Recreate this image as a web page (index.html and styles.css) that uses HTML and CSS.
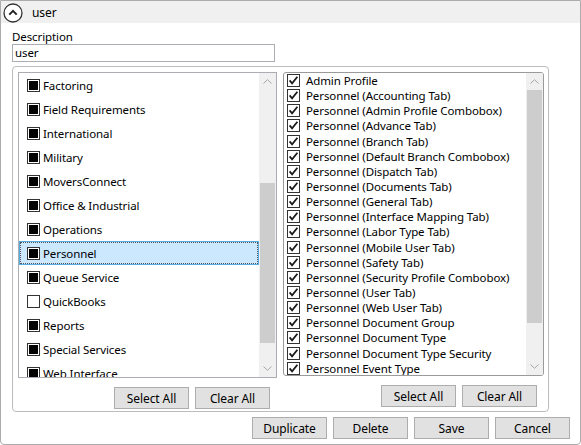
FILE: index.html
```html
<!DOCTYPE html>
<html lang="en">
<head>
  <meta charset="UTF-8" />
  <title>Security Profile</title>
  <link rel="stylesheet" href="styles.css">
</head>
<body>
  <div class="panel">
    <div class="panel-head">
      <svg class="collapse-btn" width="20" height="20" viewBox="0 0 20 20">
        <circle cx="10" cy="10" r="9" fill="#fff" stroke="#333" stroke-width="1.3"/>
        <path d="M6.3 11.6 L10 7.9 L13.7 11.6" fill="none" stroke="#222" stroke-width="2"/>
      </svg>
      <span class="head-title">user</span>
    </div>

    <div class="panel-body">
      <div class="field-label">Description</div>
      <div class="text-input">user</div>

      <div class="group">
        <div class="group-col left-col">
          <div class="list module-list">
            <div class="list-items">
              <div class="module-row"><span class="box partial"></span>Factoring</div>
              <div class="module-row"><span class="box partial"></span>Field Requirements</div>
              <div class="module-row"><span class="box partial"></span>International</div>
              <div class="module-row"><span class="box partial"></span>Military</div>
              <div class="module-row"><span class="box partial"></span>MoversConnect</div>
              <div class="module-row"><span class="box partial"></span>Office &amp; Industrial</div>
              <div class="module-row"><span class="box partial"></span>Operations</div>
              <div class="module-row selected"><span class="box partial"></span>Personnel</div>
              <div class="module-row"><span class="box partial"></span>Queue Service</div>
              <div class="module-row"><span class="box"></span>QuickBooks</div>
              <div class="module-row"><span class="box partial"></span>Reports</div>
              <div class="module-row"><span class="box partial"></span>Special Services</div>
              <div class="module-row"><span class="box partial"></span>Web Interface</div>
            </div>
            <div class="scrollbar">
              <div class="sb-arrow"><svg width="9" height="5" viewBox="0 0 9 5"><path d="M0.5 4.5 L4.5 0.7 L8.5 4.5" fill="none" stroke="#a6a6a6" stroke-width="1"/></svg></div>
              <div class="sb-track"><div class="sb-thumb thumb-left"></div></div>
              <div class="sb-arrow"><svg width="9" height="5" viewBox="0 0 9 5"><path d="M0.5 0.5 L4.5 4.3 L8.5 0.5" fill="none" stroke="#a6a6a6" stroke-width="1"/></svg></div>
            </div>
          </div>
          <div class="btn-row">
            <button class="btn">Select All</button>
            <button class="btn">Clear All</button>
          </div>
        </div>

        <div class="group-col right-col">
          <div class="list perm-list">
            <div class="list-items" id="permItems"></div>
            <div class="scrollbar">
              <div class="sb-arrow"><svg width="9" height="5" viewBox="0 0 9 5"><path d="M0.5 4.5 L4.5 0.7 L8.5 4.5" fill="none" stroke="#a6a6a6" stroke-width="1"/></svg></div>
              <div class="sb-track"><div class="sb-thumb thumb-right"></div></div>
              <div class="sb-arrow"><svg width="9" height="5" viewBox="0 0 9 5"><path d="M0.5 0.5 L4.5 4.3 L8.5 0.5" fill="none" stroke="#a6a6a6" stroke-width="1"/></svg></div>
            </div>
          </div>
          <div class="btn-row">
            <button class="btn">Select All</button>
            <button class="btn">Clear All</button>
          </div>
        </div>
      </div>

      <div class="actions">
        <button class="btn">Duplicate</button>
        <button class="btn">Delete</button>
        <button class="btn">Save</button>
        <button class="btn">Cancel</button>
      </div>
    </div>
  </div>

  <script>
    const permissions = [
      'Admin Profile',
      'Personnel (Accounting Tab)',
      'Personnel (Admin Profile Combobox)',
      'Personnel (Advance Tab)',
      'Personnel (Branch Tab)',
      'Personnel (Default Branch Combobox)',
      'Personnel (Dispatch Tab)',
      'Personnel (Documents Tab)',
      'Personnel (General Tab)',
      'Personnel (Interface Mapping Tab)',
      'Personnel (Labor Type Tab)',
      'Personnel (Mobile User Tab)',
      'Personnel (Safety Tab)',
      'Personnel (Security Profile Combobox)',
      'Personnel (User Tab)',
      'Personnel (Web User Tab)',
      'Personnel Document Group',
      'Personnel Document Type',
      'Personnel Document Type Security',
      'Personnel Event Type'
    ];

    const tick = '<svg class="tick" width="13" height="13" viewBox="0 0 13 13">' +
      '<rect x="0.5" y="0.5" width="12" height="12" fill="#fff" stroke="#333"/>' +
      '<path d="M2.6 6.4 L5.1 9.3 L10.4 2.8" fill="none" stroke="#1a1a1a" stroke-width="1.8"/></svg>';

    const permItems = document.getElementById('permItems');
    permItems.innerHTML = permissions
      .map(name => `<div class="perm-row">${tick}<span>${name}</span></div>`)
      .join('');
  </script>
</body>
</html>
```

FILE: styles.css
```css
body {
  margin: 0;
  font-family: "Segoe UI", "Noto Sans", Arial, sans-serif;
  font-size: 11.5px;
  letter-spacing: -0.1px;
  color: #000;
  background: #fff;
}

.panel {
  width: 581px;
  height: 445px;
  box-sizing: border-box;
  border: 1px solid #acacac;
  border-radius: 0 0 4px 4px;
  overflow: hidden;
}

.panel-head {
  height: 22px;
  background: #f0f0f0;
  display: flex;
  align-items: center;
  padding-left: 2px;
}

.collapse-btn {
  display: block;
  margin-top: 2px;
}

.head-title {
  margin-left: 9px;
  font-size: 12px;
}

.panel-body {
  padding: 0 10px 0 11px;
}

.field-label {
  margin-top: 6px;
  line-height: 15px;
}

.text-input {
  width: 263px;
  height: 18px;
  box-sizing: border-box;
  border: 1px solid #abadb3;
  padding-left: 2px;
  line-height: 16px;
}

.group {
  margin-top: 4px;
  width: 537px;
  height: 346px;
  box-sizing: border-box;
  border: 1px solid #bcbcbc;
  border-radius: 4px;
  padding: 5px 3px 0 5px;
  display: flex;
  gap: 6px;
}

.group-col {
  display: flex;
  flex-direction: column;
}

.left-col {
  width: 259px;
}

.right-col {
  width: 261px;
}

.list {
  display: flex;
  box-sizing: border-box;
  border: 1px solid #abadb3;
  background: #fff;
  overflow: hidden;
}

.module-list {
  height: 306px;
}

.perm-list {
  height: 304px;
  border-color: #9a9a9a;
  border-radius: 3px;
}

.list-items {
  flex: 1;
  overflow: hidden;
}

/* module rows: tri-state boxes, 24px tall */
.module-row {
  height: 24px;
  display: flex;
  align-items: center;
  padding-left: 8px;
  box-sizing: border-box;
  white-space: nowrap;
}

.module-row.selected {
  background: #cce8ff;
  border: 1px solid #56ace0;
  outline: 1px dotted #555;
  outline-offset: -2px;
  padding-left: 7px;
}

.box {
  width: 13px;
  height: 13px;
  box-sizing: border-box;
  border: 1px solid #333;
  background: #fff;
  margin-right: 3px;
  position: relative;
  flex: none;
}

.box.partial::after {
  content: "";
  position: absolute;
  left: 1px;
  top: 1px;
  width: 9px;
  height: 9px;
  background: #000;
}

/* permission rows: checked boxes, compact */
.perm-row {
  height: 15.15px;
  line-height: 15px;
  display: flex;
  align-items: center;
  padding-left: 3px;
  white-space: nowrap;
}

.tick {
  display: block;
  flex: none;
  margin-right: 6px;
}

.scrollbar {
  width: 17px;
  flex: none;
  background: #f0f0f0;
  display: flex;
  flex-direction: column;
}

.sb-arrow {
  height: 17px;
  display: flex;
  align-items: center;
  justify-content: center;
  flex: none;
}

.sb-track {
  flex: 1;
}

.sb-thumb {
  background: #cdcdcd;
  margin: 0 1px;
}

.thumb-left {
  margin-top: 93px;
  height: 160px;
}

.thumb-right {
  margin-top: 0;
  height: 233px;
}

.btn-row {
  display: flex;
  justify-content: flex-end;
  gap: 6px;
  margin-top: 9px;
}

.left-col .btn-row {
  padding-right: 7px;
}

.right-col .btn-row {
  padding-right: 7px;
}

.btn {
  width: 75px;
  height: 22px;
  box-sizing: border-box;
  border: 1px solid #adadad;
  background: #e1e1e1;
  font-family: inherit;
  font-size: 12px;
  letter-spacing: -0.1px;
  color: #000;
  padding: 0;
  margin: 0;
}

.actions {
  display: flex;
  justify-content: flex-end;
  gap: 6px;
  margin-top: 5px;
}
```
